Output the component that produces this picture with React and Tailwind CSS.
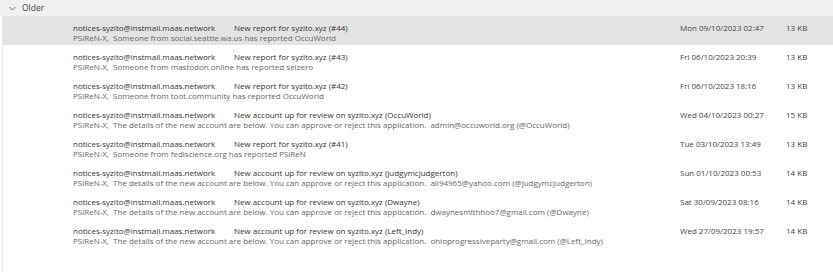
const rows = [
  { subject: 'New report for syzito.xyz (#44)', preview: 'PSiReN-X,  Someone from social.seattle.wa.us has reported OccuWorld', date: 'Mon 09/10/2023 02:47', size: '13 KB', selected: true },
  { subject: 'New report for syzito.xyz (#43)', preview: 'PSiReN-X,  Someone from mastodon.online has reported selzero', date: 'Fri 06/10/2023 20:39', size: '13 KB' },
  { subject: 'New report for syzito.xyz (#42)', preview: 'PSiReN-X,  Someone from toot.community has reported OccuWorld', date: 'Fri 06/10/2023 18:16', size: '13 KB' },
  { subject: 'New account up for review on syzito.xyz (OccuWorld)', preview: 'PSiReN-X,  The details of the new account are below. You can approve or reject this application.  admin@occuworld.org (@OccuWorld)', date: 'Wed 04/10/2023 00:27', size: '15 KB' },
  { subject: 'New report for syzito.xyz (#41)', preview: 'PSiReN-X,  Someone from fediscience.org has reported PSiReN', date: 'Tue 03/10/2023 13:49', size: '13 KB' },
  { subject: 'New account up for review on syzito.xyz (judgymcjudgerton)', preview: 'PSiReN-X,  The details of the new account are below. You can approve or reject this application.  ali94965@yahoo.com (@judgymcjudgerton)', date: 'Sun 01/10/2023 00:53', size: '14 KB' },
  { subject: 'New account up for review on syzito.xyz (Dwayne)', preview: 'PSiReN-X,  The details of the new account are below. You can approve or reject this application.  dwaynesmithhoo7@gmail.com (@Dwayne)', date: 'Sat 30/09/2023 08:16', size: '14 KB' },
  { subject: 'New account up for review on syzito.xyz (Left_Indy)', preview: 'PSiReN-X,  The details of the new account are below. You can approve or reject this application.  ohioprogressiveparty@gmail.com (@Left_Indy)', date: 'Wed 27/09/2023 19:57', size: '14 KB' },
];

const MailRow = ({ row }) => (
  <div className={`flex h-[29px] pl-[70px] pt-[6px] ${row.selected ? 'bg-[#e3e3e3]' : 'bg-white'}`}>
    <div className="flex-1 min-w-0">
      <div className="flex h-[11px] items-center text-[#333]">
        <span className="w-[161px] whitespace-nowrap">notices-syzito@instmail.maas.network</span>
        <span className="whitespace-nowrap">{row.subject}</span>
      </div>
      <div className="h-[10px] flex items-center whitespace-pre text-[#666]">{row.preview}</div>
    </div>
    <div className="flex h-[11px] items-center text-[#444]">
      <span className="w-[106px] whitespace-nowrap">{row.date}</span>
      <span className="w-[47px] whitespace-nowrap">{row.size}</span>
    </div>
  </div>
);

export default function App() {
  return (
    <div className="w-[833px] h-[277px] bg-white overflow-hidden text-[8px] leading-none" style={{ fontFamily: '"Open Sans", "Noto Sans", sans-serif' }}>
      <div className="flex h-[16px] items-center bg-[#f0f0f0] pl-[9px] text-[#444]">
        <svg width="7" height="5" viewBox="0 0 7 5" className="mr-[6px]">
          <path d="M0.5 1 L3.5 4 L6.5 1" fill="none" stroke="#666" strokeWidth="1" />
        </svg>
        <span className="text-[8.5px]">Older</span>
      </div>
      <div className="ml-[2px] border-l border-[#e6e6e6] h-[256px]">
        {rows.map((row, i) => (
          <MailRow key={i} row={row} />
        ))}
      </div>
    </div>
  );
}
